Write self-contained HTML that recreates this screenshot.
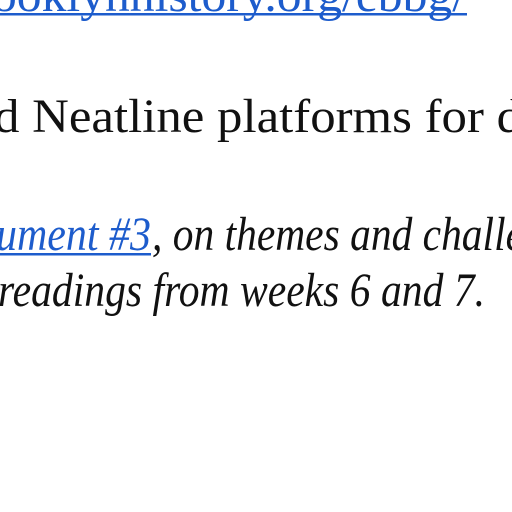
<!DOCTYPE html>
<html><head><style>
html,body{margin:0;padding:0;background:#fff;width:512px;height:512px;overflow:hidden}
svg{display:block}
text{font-family:"Liberation Serif",serif;font-size:48px}
</style></head><body>
<svg width="512" height="512" viewBox="0 0 512 512">
<text x="-8" y="11" fill="#1d5ccc" textLength="474" lengthAdjust="spacingAndGlyphs">ooklynhistory.org/ebbg/</text>
<rect x="0" y="13" width="467" height="2.5" fill="#1d5ccc"/>
<text x="-6" y="132" fill="#111" textLength="528" lengthAdjust="spacingAndGlyphs">d Neatline platforms for d</text>
<text x="-4" y="250" font-style="italic" fill="#1d5ccc" textLength="155" lengthAdjust="spacingAndGlyphs">ument #3</text>
<rect x="0" y="253" width="151" height="2.5" fill="#1d5ccc"/>
<text x="152" y="250" font-style="italic" fill="#111" textLength="372" lengthAdjust="spacingAndGlyphs">, on themes and challe</text>
<text x="-2" y="306" font-style="italic" fill="#111" textLength="487" lengthAdjust="spacingAndGlyphs">readings from weeks 6 and 7.</text>
</svg>
</body></html>
